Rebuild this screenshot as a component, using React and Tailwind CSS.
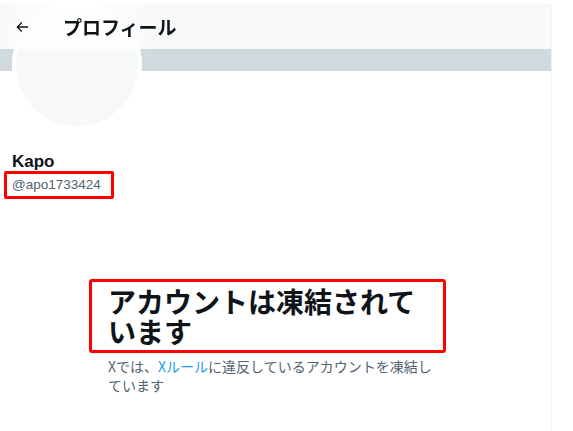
import React from 'react';

const jp = { fontFamily: '"Noto Sans CJK JP", "Noto Sans", sans-serif' };
const latin = { fontFamily: '"Liberation Sans", Arial, sans-serif' };

const BackArrow = () => (
  <svg viewBox="0 0 24 24" width="16" height="16" className="fill-[#0f1419]">
    <path d="M7.414 13l5.043 5.04-1.414 1.42L3.586 12l7.457-7.46 1.414 1.42L7.414 11H21v2H7.414z" />
  </svg>
);

const Header = () => (
  <div className="absolute top-0 left-0 right-0 z-10 h-[45px] flex items-center bg-white/85 backdrop-blur-md">
    <div className="w-[63px] pl-[14px] flex items-center">
      <BackArrow />
    </div>
    <h1 className="text-[19px] font-bold text-[#0f1419] leading-[24px]" style={jp}>
      プロフィール
    </h1>
  </div>
);

const SuspendedNotice = () => (
  <div className="mt-[80px] ml-[89px]">
    <div className="w-[357px] border-[3px] border-[#ff0000] rounded-[3px] pl-[16px] pt-[4px] pb-[4px]">
      <h2 className="w-[330px] text-[28px] font-bold leading-[30px] text-[#0f1419]" style={jp}>
        アカウントは凍結されています
      </h2>
    </div>
    <p className="w-[349px] pl-[19px] mt-[4px] text-[14px] leading-[19px] text-[#536471]" style={jp}>
      Xでは、<span className="text-[#1d9bf0]">Xルール</span>に違反しているアカウントを凍結しています
    </p>
  </div>
);

export default function App() {
  return (
    <div className="min-h-screen bg-white pt-[4px]">
      <div className="relative w-[552px] min-h-[427px] border-r border-[#eff3f4]">
        <Header />
        <div className="h-[67px] bg-[#cfd9de]" />
        <div className="relative px-[12px] -mt-[71px]">
          <div className="w-[130px] h-[130px] rounded-full border-4 border-white bg-[#f7f9f9]" />
        </div>
        <div className="mt-[22px] px-[12px]">
          <div className="text-[17px] font-bold leading-[20px] text-[#0f1419]" style={latin}>
            Kapo
          </div>
        </div>
        <div className="ml-[4px] -mt-[1px]">
          <div className="inline-block border-[3px] border-[#ff0000] rounded-[2px] pl-[5px] pr-[10px] py-[2px]">
            <div className="text-[13.5px] leading-[18px] text-[#536471]" style={latin}>
              @apo1733424
            </div>
          </div>
        </div>
        <SuspendedNotice />
      </div>
    </div>
  );
}
